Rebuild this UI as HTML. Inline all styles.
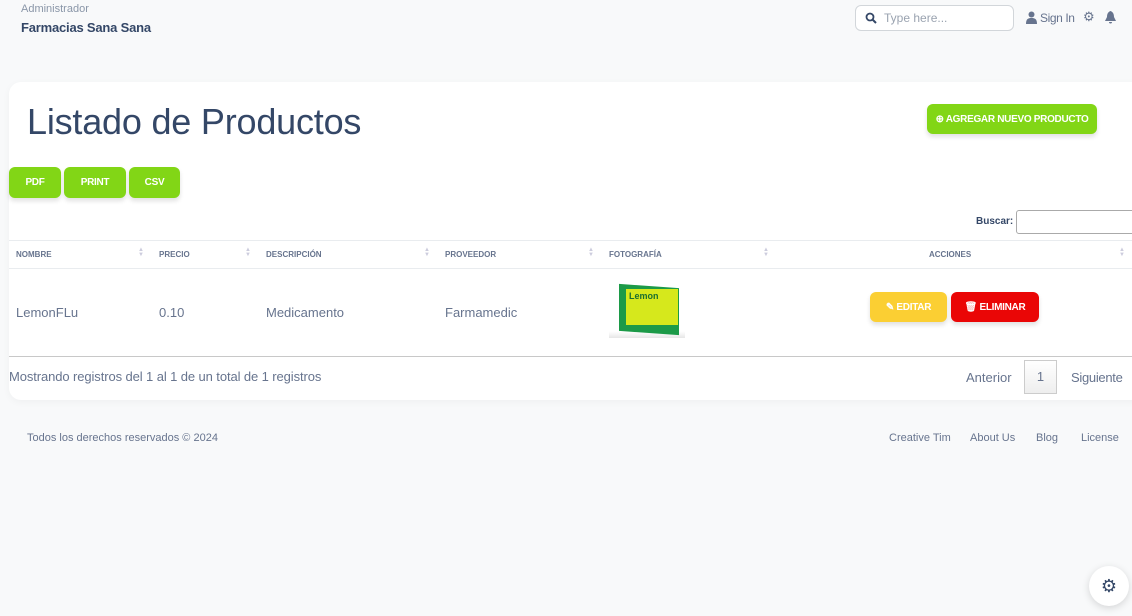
<!DOCTYPE html>
<html><head><meta charset="utf-8"><style>
*{box-sizing:border-box;margin:0;padding:0}
body{width:1132px;height:616px;background:#f8f9fa;font-family:"Liberation Sans",sans-serif;position:relative;overflow:hidden;color:#344767}
.abs{position:absolute}
.btn{position:absolute;background:#82d616;color:#fff;font-weight:bold;font-size:10px;border-radius:6px;display:flex;align-items:center;justify-content:center;box-shadow:0 3px 5px rgba(0,0,0,.12);letter-spacing:-0.3px}
.hd{position:absolute;top:250px;font-size:8px;font-weight:bold;color:#67748e}
.cell{position:absolute;top:305px;font-size:13px;color:#67748e}
.arr{position:absolute;top:248px;font-size:6px;color:#ccd;line-height:5px}
</style></head><body>
<div class="abs" style="left:21px;top:3px;font-size:11px;color:#8a96a8">Administrador</div>
<div class="abs" style="left:21px;top:20px;font-size:13px;font-weight:bold;color:#344767;letter-spacing:-0.2px">Farmacias Sana Sana</div>
<div class="abs" style="left:855px;top:5px;width:159px;height:26px;border:1px solid #d2d6da;border-radius:6px;background:#fff"></div>
<svg class="abs" style="left:865px;top:12px" width="12" height="12" viewBox="0 0 12 12"><circle cx="5" cy="5" r="3.5" fill="none" stroke="#344767" stroke-width="1.8"/><path d="M7.5 7.5L11 11" stroke="#344767" stroke-width="2"/></svg>
<div class="abs" style="left:884px;top:11px;font-size:12px;color:#9aa3b0">Type here...</div>
<svg class="abs" style="left:1026px;top:11px" width="11" height="13" viewBox="0 0 11 13"><circle cx="5.5" cy="3.5" r="3" fill="#67748e"/><path d="M0 13C0 8 2 7 5.5 7S11 8 11 13Z" fill="#67748e"/></svg>
<div class="abs" style="left:1040px;top:11px;font-size:12px;color:#67748e;letter-spacing:-0.4px">Sign In</div>
<div class="abs" style="left:1083px;top:9px;font-size:13px;color:#67748e">⚙</div>
<svg class="abs" style="left:1105px;top:11px" width="11" height="13" viewBox="0 0 11 13"><path d="M5.5 0C3 1 2 3 2 6L0 10H11L9 6C9 3 8 1 5.5 0Z M4 11H7A1.5 1.5 0 0 1 4 11Z" fill="#67748e"/></svg>
<div class="abs" style="left:9px;top:82px;width:1140px;height:318px;background:#fff;border-radius:12px;box-shadow:0 2px 8px rgba(0,0,0,.04)"></div>
<div class="abs" style="left:27px;top:101px;font-size:36px;color:#344767;font-weight:300;letter-spacing:-0.2px">Listado de Productos</div>
<div class="btn" style="left:927px;top:104px;width:170px;height:30px">⊕ AGREGAR NUEVO PRODUCTO</div>
<div class="btn" style="left:9px;top:167px;width:52px;height:31px">PDF</div>
<div class="btn" style="left:64px;top:167px;width:62px;height:31px">PRINT</div>
<div class="btn" style="left:129px;top:167px;width:51px;height:31px">CSV</div>
<div class="abs" style="left:976px;top:216px;font-size:10px;font-weight:bold;color:#344767">Buscar:</div>
<div class="abs" style="left:1016px;top:210px;width:130px;height:24px;border:1px solid #aaa;border-radius:3px"></div>
<div class="abs" style="left:9px;top:240px;width:1123px;height:1px;background:#e9ecef"></div>
<div class="abs" style="left:9px;top:268px;width:1123px;height:1px;background:#e9ecef"></div>
<div class="hd" style="left:16px">NOMBRE</div><div class="arr" style="left:138px">▲<br>▼</div>
<div class="hd" style="left:159px">PRECIO</div><div class="arr" style="left:245px">▲<br>▼</div>
<div class="hd" style="left:266px">DESCRIPCIÓN</div><div class="arr" style="left:424px">▲<br>▼</div>
<div class="hd" style="left:445px">PROVEEDOR</div><div class="arr" style="left:588px">▲<br>▼</div>
<div class="hd" style="left:609px">FOTOGRAFÍA</div><div class="arr" style="left:763px">▲<br>▼</div>
<div class="hd" style="left:929px">ACCIONES</div><div class="arr" style="left:1119px">▲<br>▼</div>
<div class="cell" style="left:16px">LemonFLu</div>
<div class="cell" style="left:159px">0.10</div>
<div class="cell" style="left:266px">Medicamento</div>
<div class="cell" style="left:445px">Farmamedic</div>
<div class="abs" style="left:609px;top:284px;width:76px;height:54px;background:linear-gradient(#fff,#fff 88%,#e6e6e6)">
<div class="abs" style="left:10px;top:2px;width:60px;height:47px;background:#1c9a48;transform:skewY(4deg)"></div>
<div class="abs" style="left:17px;top:5px;width:52px;height:36px;background:#d6e81c"></div>
<div class="abs" style="left:20px;top:7px;font-size:9px;font-weight:bold;color:#1a6e30">Lemon</div>
</div>
<div class="btn" style="left:870px;top:292px;width:77px;height:30px;background:#fbcf33">✎ EDITAR</div>
<div class="btn" style="left:951px;top:292px;width:88px;height:30px;background:#ea0606">🗑 ELIMINAR</div>
<div class="abs" style="left:9px;top:356px;width:1123px;height:1px;background:#c8c8c8"></div>
<div class="abs" style="left:9px;top:369px;font-size:13px;color:#67748e;letter-spacing:-0.1px">Mostrando registros del 1 al 1 de un total de 1 registros</div>
<div class="abs" style="left:966px;top:370px;font-size:13px;color:#67748e">Anterior</div>
<div class="abs" style="left:1024px;top:360px;width:33px;height:34px;border:1px solid #ccc;background:linear-gradient(#fff,#eee);font-size:13px;color:#67748e;text-align:center;line-height:32px">1</div>
<div class="abs" style="left:1071px;top:370px;font-size:13px;color:#67748e;letter-spacing:-0.3px">Siguiente</div>
<div class="abs" style="left:27px;top:432px;font-size:11px;color:#67748e">Todos los derechos reservados © 2024</div>
<div class="abs" style="left:889px;top:432px;font-size:11px;color:#67748e">Creative Tim</div>
<div class="abs" style="left:970px;top:432px;font-size:11px;color:#67748e">About Us</div>
<div class="abs" style="left:1036px;top:432px;font-size:11px;color:#67748e">Blog</div>
<div class="abs" style="left:1081px;top:432px;font-size:11px;color:#67748e">License</div>
<div class="abs" style="left:1089px;top:566px;width:40px;height:40px;border-radius:50%;background:#fff;box-shadow:0 2px 8px rgba(0,0,0,.15);text-align:center;line-height:40px;font-size:18px;color:#344767">⚙</div>
</body></html>
